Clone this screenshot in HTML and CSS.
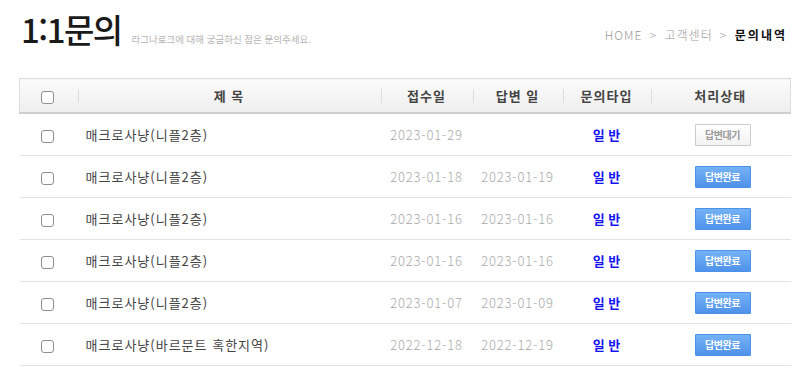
FILE: index.html
```html
<!DOCTYPE html>
<html lang="ko">
<head>
	<meta charset="utf-8">
	<title>1:1문의</title>
	<link rel="stylesheet" href="styles.css">
</head>
<body>
	<div class="wrap">
		<div class="top">
			<h2 class="page-title">1:1문의 <span class="sub">라그나로크에 대해 궁금하신 점은 문의주세요.</span></h2>
			<div class="path">HOME &gt; 고객센터 &gt; <b>문의내역</b></div>
		</div>

		<table class="qna">
			<colgroup>
				<col class="c-chk"><col class="c-title"><col class="c-date"><col class="c-date2"><col class="c-type"><col class="c-state">
			</colgroup>
			<thead>
				<tr>
					<th><input type="checkbox"></th>
					<th>제 목</th>
					<th>접수일</th>
					<th>답변 일</th>
					<th>문의타입</th>
					<th>처리상태</th>
				</tr>
			</thead>
			<tbody>
				<tr>
					<td><input type="checkbox"></td>
					<td class="title">매크로사냥(니플2층)</td>
					<td class="date">2023-01-29</td>
					<td class="date"></td>
					<td class="type">일 반</td>
					<td><span class="btn wait">답변대기</span></td>
				</tr>
				<tr>
					<td><input type="checkbox"></td>
					<td class="title">매크로사냥(니플2층)</td>
					<td class="date">2023-01-18</td>
					<td class="date">2023-01-19</td>
					<td class="type">일 반</td>
					<td><span class="btn done">답변완료</span></td>
				</tr>
				<tr>
					<td><input type="checkbox"></td>
					<td class="title">매크로사냥(니플2층)</td>
					<td class="date">2023-01-16</td>
					<td class="date">2023-01-16</td>
					<td class="type">일 반</td>
					<td><span class="btn done">답변완료</span></td>
				</tr>
				<tr>
					<td><input type="checkbox"></td>
					<td class="title">매크로사냥(니플2층)</td>
					<td class="date">2023-01-16</td>
					<td class="date">2023-01-16</td>
					<td class="type">일 반</td>
					<td><span class="btn done">답변완료</span></td>
				</tr>
				<tr>
					<td><input type="checkbox"></td>
					<td class="title">매크로사냥(니플2층)</td>
					<td class="date">2023-01-07</td>
					<td class="date">2023-01-09</td>
					<td class="type">일 반</td>
					<td><span class="btn done">답변완료</span></td>
				</tr>
				<tr>
					<td><input type="checkbox"></td>
					<td class="title">매크로사냥(바르문트 혹한지역)</td>
					<td class="date">2022-12-18</td>
					<td class="date">2022-12-19</td>
					<td class="type">일 반</td>
					<td><span class="btn done">답변완료</span></td>
				</tr>
			</tbody>
		</table>
	</div>
</body>
</html>
```

FILE: styles.css
```css
html, body { margin: 0; padding: 0; background: #fff; }
body {
  font-family: "Noto Sans CJK KR", "Noto Sans", sans-serif;
  font-size: 12px;
  color: #333;
}

.wrap { padding: 11px 10px 0 19px; }

.top {
  display: flex;
  justify-content: space-between;
  align-items: flex-start;
  height: 67px;
}

.page-title {
  margin: 0;
  margin-left: 2px;
  font-size: 33px;
  line-height: 36px;
  font-weight: 500;
  letter-spacing: -1.5px;
  color: #1a1a1a;
  white-space: nowrap;
}

.page-title .sub {
  font-size: 9.5px;
  font-weight: 400;
  letter-spacing: 0;
  color: #b5b5b5;
  margin-left: 2px;
}

.path {
  margin-top: 15px;
  margin-right: 3px;
  font-size: 12px;
  font-weight: 300;
  color: #999;
  letter-spacing: 1px;
  word-spacing: 3px;
}
.path b { color: #111; font-weight: 700; letter-spacing: 2px; }

table.qna {
  width: 771px;
  border-collapse: collapse;
  table-layout: fixed;
}
col.c-chk { width: 58px; }
col.c-title { width: 303px; }
col.c-date { width: 92px; }
col.c-date2 { width: 90px; }
col.c-type { width: 88px; }
col.c-state { width: 140px; }

.qna th {
  height: 33px;
  padding: 0;
  font-size: 13px;
  font-weight: 700;
  color: #444;
  letter-spacing: 1px;
  border-top: 1px solid #dcdcdc;
  border-bottom: 2px solid #cfcfcf;
  background:
    linear-gradient(#dcdcdc, #dcdcdc) left center / 1px 14px no-repeat,
    linear-gradient(#fbfbfb, #eeeeee);
}
.qna th:first-child {
  border-left: 1px solid #dcdcdc;
  background: linear-gradient(#fbfbfb, #eeeeee);
}
.qna th:last-child { border-right: 1px solid #dcdcdc; }

.qna td {
  height: 41px;
  padding: 0;
  text-align: center;
  border-bottom: 1px solid #e3e3e3;
}

input[type="checkbox"] {
  -webkit-appearance: none;
  appearance: none;
  box-sizing: border-box;
  margin: 0 0 0 -2px;
  width: 13px;
  height: 13px;
  border: 1px solid #8f8f8f;
  border-radius: 3px;
  background: #fff;
  vertical-align: middle;
}

.qna td.title {
  text-align: left;
  padding-left: 8px;
  font-size: 13px;
  color: #444;
  letter-spacing: 1px;
}

.qna td.date {
  color: #aaa;
  font-size: 13px;
  font-weight: 300;
  letter-spacing: .8px;
}

.qna td.type {
  color: #1414f0;
  font-weight: 700;
  font-size: 13px;
}

.btn {
  display: inline-block;
  width: 54px;
  height: 20px;
  line-height: 20px;
  font-size: 10px;
  font-weight: 700;
  letter-spacing: -.5px;
  border: 1px solid;
  border-radius: 1px;
  margin-left: 4px;
}
.btn.wait {
  color: #999;
  border-color: #ccc;
  background: linear-gradient(#fff, #f2f2f2);
}
.btn.done {
  color: #fff;
  border-color: #4b93ea;
  background: linear-gradient(#74b2f6, #4f92ea);
}
```
